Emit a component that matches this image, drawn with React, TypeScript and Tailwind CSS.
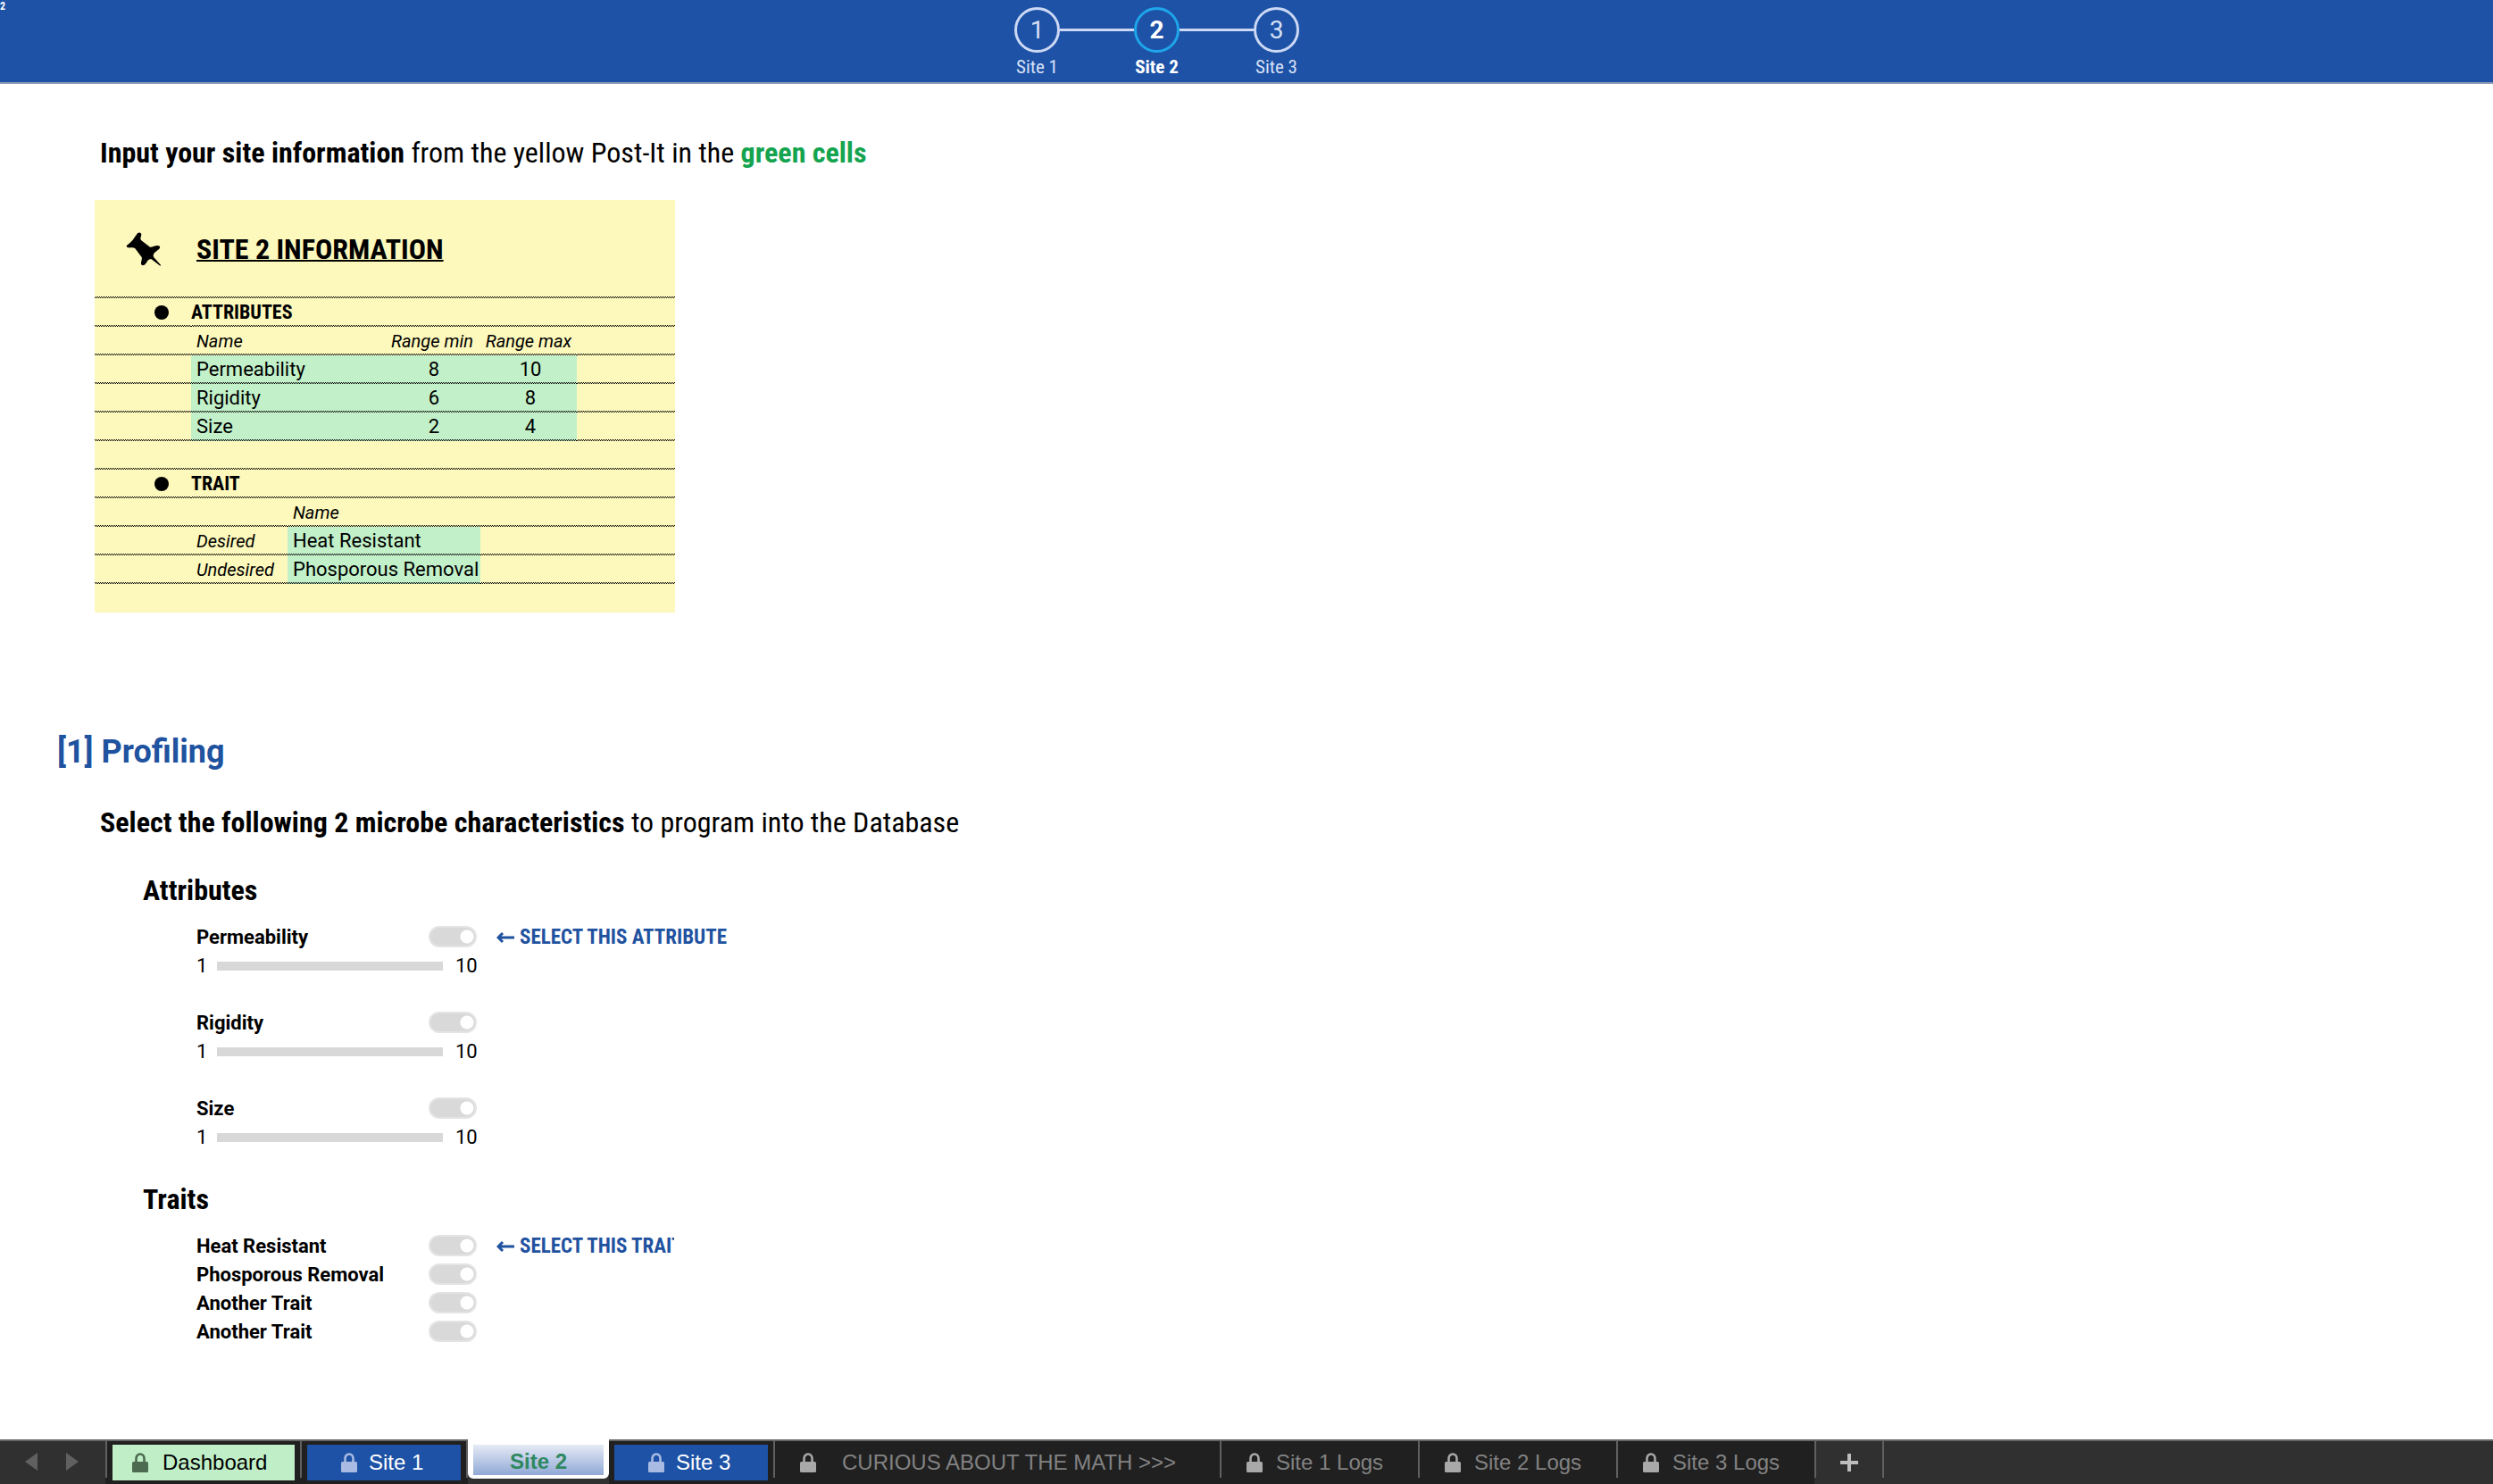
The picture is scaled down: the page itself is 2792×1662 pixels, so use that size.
import { Fragment } from "react";
import type { ReactNode } from "react";

const ROBOTO = "font-['Roboto',sans-serif]";
const CONDENSED = "font-['Roboto_Condensed','Roboto',sans-serif]";
const RULE =
  "bg-[image:repeating-conic-gradient(#000_0_25%,transparent_0_50%)] bg-[length:2px_2px] bg-repeat-x bg-bottom";

function Steps() {
  const steps = ["Site 1", "Site 2", "Site 3"];
  return (
    <nav aria-label="Sites" className="flex items-start pt-2">
      {steps.map((name, i) => {
        const current = i === 1;
        return (
          <Fragment key={name}>
            {i > 0 && <span className="mt-6 h-[3px] w-[83px] bg-[#ccd8f4]" />}
            <button
              type="button"
              aria-current={current ? "step" : undefined}
              className={`flex w-[51px] flex-col items-center gap-1 whitespace-nowrap ${
                current ? "font-bold text-white" : "text-[#d7e0f6]"
              }`}
            >
              <span
                className={`flex size-[51px] items-center justify-center rounded-full border-[3px] text-[28px] leading-none ${
                  current ? "border-[#1fa5ea]" : "border-[#ccd8f4]"
                }`}
              >
                {i + 1}
              </span>
              <span className={`text-[21px] leading-6 ${CONDENSED}`}>{name}</span>
            </button>
          </Fragment>
        );
      })}
    </nav>
  );
}

function Pin() {
  return (
    <svg viewBox="0 0 120 114" className="h-[38px] w-10" aria-hidden="true">
      <path
        d="M42 4C46-1 55 1 55 8C54 15 50 20 54 27L84 50C92 51 100 45 109 45C117 45 120 51 115 56C108 63 99 66 96 74C94 80 96 83 99 87L120 110C121 113 118 114 116 112L89 91C84 90 80 91 76 96C72 102 69 109 63 111C56 113 53 108 54 102C55 95 58 89 56 84L34 55C27 50 17 53 11 52C4 51 4 46 8 43C23 34 32 18 42 4Z"
        fill="#000"
      />
    </svg>
  );
}

function Cell({ children, span, className = "" }: { children?: ReactNode; span?: number; className?: string }) {
  return (
    <td colSpan={span} className={`h-8 p-0 ${RULE} ${className}`}>
      {children}
    </td>
  );
}

function Entry({ label, value, center = false }: { label: string; value: string; center?: boolean }) {
  return (
    <input
      aria-label={label}
      defaultValue={value}
      className={`block h-8 w-full bg-transparent leading-8 outline-none ${center ? "pl-1 text-center" : "pl-1.5"}`}
    />
  );
}

function SectionRow({ children }: { children: string }) {
  return (
    <tr>
      <Cell>
        <span className="ml-auto mr-[25px] block size-4 rounded-full bg-black" />
      </Cell>
      <Cell span={5} className={`font-bold ${CONDENSED}`}>
        {children}
      </Cell>
    </tr>
  );
}

const attributes = [
  ["Permeability", "8", "10"],
  ["Rigidity", "6", "8"],
  ["Size", "2", "4"],
];
const traits = [
  ["Desired", "Heat Resistant"],
  ["Undesired", "Phosporous Removal"],
];
const GREEN = "bg-[#c2f0c9]";

function PostIt() {
  return (
    <section className="mt-[33px] ml-[106px] w-[650px] bg-[#fdf8bb] text-[22px] leading-8">
      <div className={`flex h-[110px] items-center pl-[34px] ${RULE}`}>
        <Pin />
        <h2
          className={`ml-10 text-[32px] leading-10 font-bold underline decoration-2 underline-offset-1 [text-decoration-skip-ink:none] ${CONDENSED}`}
        >
          SITE 2 INFORMATION
        </h2>
      </div>
      <table className="w-full table-fixed border-collapse text-left">
        <colgroup>
          <col className="w-[108px]" />
          <col className="w-[108px]" />
          <col className="w-[108px]" />
          <col className="w-[108px]" />
          <col className="w-[108px]" />
          <col />
        </colgroup>
        <tbody>
          <SectionRow>ATTRIBUTES</SectionRow>
          <tr className="text-xl leading-8 italic">
            <Cell />
            <Cell span={2} className="pl-1.5">Name</Cell>
            <Cell className="text-center whitespace-nowrap">Range min</Cell>
            <Cell className="text-center whitespace-nowrap">Range max</Cell>
            <Cell />
          </tr>
          {attributes.map(([name, min, max]) => (
            <tr key={name}>
              <Cell />
              <Cell span={2} className={GREEN}>
                <Entry label="Attribute name" value={name} />
              </Cell>
              <Cell className={GREEN}>
                <Entry label={`${name} range min`} value={min} center />
              </Cell>
              <Cell className={GREEN}>
                <Entry label={`${name} range max`} value={max} center />
              </Cell>
              <Cell />
            </tr>
          ))}
          <tr>
            <Cell span={6} />
          </tr>
          <SectionRow>TRAIT</SectionRow>
          <tr className="text-xl leading-8 italic">
            <Cell span={2} />
            <Cell span={4} className="pl-1.5">Name</Cell>
          </tr>
          {traits.map(([kind, name]) => (
            <tr key={kind}>
              <Cell />
              <Cell className="pl-1.5 text-xl leading-8 italic">{kind}</Cell>
              <Cell span={2} className={GREEN}>
                <Entry label={`${kind} trait`} value={name} />
              </Cell>
              <Cell span={2} />
            </tr>
          ))}
          <tr>
            <td colSpan={6} className="h-8" />
          </tr>
        </tbody>
      </table>
    </section>
  );
}

function SwitchRow({ id, name, hint }: { id: string; name: string; hint?: string }) {
  return (
    <div className="flex h-8 items-center">
      <label htmlFor={id} className="w-[260px] font-bold">
        {name}
      </label>
      <input
        id={id}
        type="checkbox"
        role="switch"
        className="mb-0.5 h-6 w-[54px] appearance-none rounded-full border-2 border-[#e4e4e4] bg-[#d9d9d9] bg-[radial-gradient(circle_at_41px_10px,#fff_7px,transparent_8px)]"
      />
      {hint && (
        <span className="ml-[22px] flex w-[199px] items-center gap-1.5 font-bold whitespace-nowrap text-[#1f529f]">
          <svg viewBox="0 0 20 14" className="h-3.5 w-5 shrink-0" aria-hidden="true">
            <path d="M7 2L2 7l5 5M2 7h18" fill="none" stroke="currentColor" strokeWidth="3" />
          </svg>
          <span className={`text-[23px] leading-8 ${CONDENSED} ${hint.endsWith("TRAIT") ? "overflow-hidden" : ""}`}>
            {hint}
          </span>
        </span>
      )}
    </div>
  );
}

function AttributeControl({ name, hint }: { name: string; hint?: string }) {
  return (
    <div className="mb-8">
      <SwitchRow id={`attr-${name}`} name={name} hint={hint} />
      <div className="flex h-8 items-center">
        <span className="w-[23px]">1</span>
        <input
          type="range"
          aria-label={name}
          min={1}
          max={10}
          className="h-2.5 w-[253px] appearance-none bg-[#d8d8d8] [&::-webkit-slider-thumb]:size-0 [&::-webkit-slider-thumb]:appearance-none"
        />
        <span className="ml-[14px]">10</span>
      </div>
    </div>
  );
}

function Lock({ className = "" }: { className?: string }) {
  return (
    <svg viewBox="0 0 18 22" className={`h-[22px] w-[18px] shrink-0 ${className}`} aria-hidden="true">
      <path d="M4.500 11V6.500a4.500 5 0 0 1 9 0V11" fill="none" stroke="currentColor" strokeWidth="2.600" />
      <rect y="10" width="18" height="12" rx="1.500" fill="currentColor" />
    </svg>
  );
}

function ColorTab({ name, color, pad }: { name: string; color: string; pad: string }) {
  return (
    <div className="bg-[#202020] px-1.5 pt-1">
      <button type="button" role="tab" aria-selected={false} className={`flex h-10 items-center ${color} ${pad}`}>
        {name === "Dashboard" ? <Lock className="text-[#4c6a4f]" /> : <Lock className="text-[#a9bbe2]" />}
        {name}
      </button>
    </div>
  );
}

function DarkTab({ name, gap = "gap-[15px]", width }: { name: string; gap?: string; width: string }) {
  return (
    <button
      type="button"
      role="tab"
      aria-selected={false}
      className={`flex h-12 items-center bg-[#202020] pl-7 text-[#828282] ${gap} ${width}`}
    >
      <Lock className="text-[#a9a9a9]" />
      {name}
    </button>
  );
}

function Separator() {
  return <span className="h-[41px] w-0.5 shrink-0 bg-[#606060]" />;
}

function SheetTabs() {
  return (
    <footer className="flex h-[50px] bg-[#303030] font-['Liberation_Sans',sans-serif] text-2xl leading-[30px] whitespace-nowrap shadow-[inset_0_2px_0_#666]">
      <div className="flex w-[118px] items-center gap-8 pl-7 text-[#606060]">
        <button type="button" aria-label="Previous sheet">
          <svg viewBox="0 0 14 20" className="h-5 w-3.5">
            <path d="M14 0v20L0 10z" fill="currentColor" />
          </svg>
        </button>
        <button type="button" aria-label="Next sheet">
          <svg viewBox="0 0 14 20" className="h-5 w-3.5">
            <path d="M0 0v20l14-10z" fill="currentColor" />
          </svg>
        </button>
      </div>
      <div role="tablist" aria-label="Sheets" className="flex">
        <div className="mt-0.5 flex bg-[#202020]">
          <Separator />
          <ColorTab name="Dashboard" color="bg-[#c0eec7] text-black" pad="w-[204px] gap-4 pl-[22px]" />
          <Separator />
          <ColorTab name="Site 1" color="bg-[#1d52a6] text-white" pad="w-[172px] gap-[13px] pl-[38px]" />
          <Separator />
        </div>
        <div className="bg-[#303030]">
          <button
            type="button"
            role="tab"
            aria-selected
            className="flex h-11 w-[158px] items-center justify-center rounded-b-md border-x-[6px] border-t-[6px] border-b-4 border-white bg-linear-to-b from-[#e6ebf5] to-[#91a9d6] pt-1 font-bold text-[#2f8860]"
          >
            Site 2
          </button>
        </div>
        <div className="mt-0.5 flex bg-[#202020]">
          <ColorTab name="Site 3" color="bg-[#1d52a6] text-white" pad="w-[172px] gap-[13px] pl-[38px]" />
          <Separator />
          <DarkTab name="CURIOUS ABOUT THE MATH >>>" gap="gap-[29px]" width="w-[498px]" />
          <Separator />
          <DarkTab name="Site 1 Logs" width="w-[220px]" />
          <Separator />
          <DarkTab name="Site 2 Logs" width="w-[220px]" />
          <Separator />
          <DarkTab name="Site 3 Logs" width="w-[220px]" />
        </div>
      </div>
      <div className="mt-0.5 flex">
        <Separator />
        <button type="button" aria-label="Add sheet" className="flex h-12 w-[74px] items-center justify-center text-[#bdbdbd]">
          <svg viewBox="0 0 20 20" className="size-5">
            <path d="M10 0v20M0 10h20" stroke="currentColor" strokeWidth="4" />
          </svg>
        </button>
        <Separator />
      </div>
    </footer>
  );
}

export default function App() {
  return (
    <div className={`flex min-h-screen flex-col bg-white text-[22px] leading-8 text-black ${ROBOTO}`}>
      <header className="flex h-[94px] border-b-2 border-[#8f9bb3] bg-[#1d52a6]">
        <span className={`w-[1136px] pt-px text-xs leading-none font-bold text-white ${CONDENSED}`}>2</span>
        <Steps />
      </header>
      <main className="grow">
        <p className={`mt-[57px] ml-28 text-[32px] leading-10 ${CONDENSED}`}>
          <b>Input your site information</b> from the yellow Post-It in the <b className="text-[#14a44f]">green cells</b>
        </p>
        <PostIt />
        <h1 className="mt-[136px] ml-16 text-4xl leading-10 font-bold text-[#1f529f]">[1] Profiling</h1>
        <p className={`mt-[39px] ml-28 text-[32px] leading-10 ${CONDENSED}`}>
          <b>Select the following 2 microbe characteristics</b> to program into the Database
        </p>
        <h2 className={`mt-9 ml-40 text-[32px] leading-10 font-bold ${CONDENSED}`}>Attributes</h2>
        <div className="mt-[17px] ml-[220px]">
          <AttributeControl name="Permeability" hint="SELECT THIS ATTRIBUTE" />
          <AttributeControl name="Rigidity" />
          <AttributeControl name="Size" />
        </div>
        <h2 className={`mt-[33px] ml-40 text-[32px] leading-10 font-bold ${CONDENSED}`}>Traits</h2>
        <div className="mt-[17px] ml-[220px]">
          <SwitchRow id="trait-1" name="Heat Resistant" hint="SELECT THIS TRAIT" />
          <SwitchRow id="trait-2" name="Phosporous Removal" />
          <SwitchRow id="trait-3" name="Another Trait" />
          <SwitchRow id="trait-4" name="Another Trait" />
        </div>
      </main>
      <SheetTabs />
    </div>
  );
}
